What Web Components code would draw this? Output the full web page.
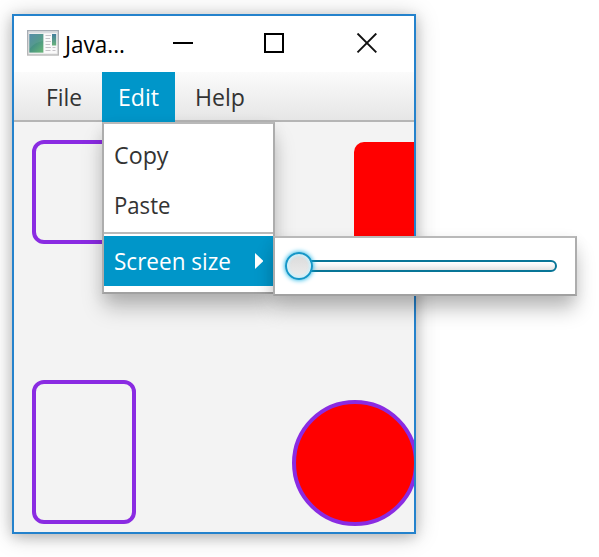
<!DOCTYPE html>
<html lang="en">
<head>
<meta charset="utf-8">
<title>Java menu</title>
<style>
html,body{margin:0;height:100%;overflow:hidden;background:#fff}
body{font:23px/34px "Open Sans","Noto Sans",sans-serif;color:#333}
</style>
</head>
<body>
<fx-desktop></fx-desktop>
<script>
const define = (name, html, init) => customElements.define(name, class extends HTMLElement {
  connectedCallback() {
    if (this.shadowRoot) return;
    this.attachShadow({mode: 'open'}).innerHTML = html;
    if (init) init(this);
  }
});

/* Text condensed to the advance width given in the "width" attribute. */
define('fx-label', `<style>
  :host{display:block;white-space:nowrap;flex:none;height:34px}
  span{display:inline-block;transform-origin:0 0}
</style><span><slot></slot></span>`, el => {
  const w = Number(el.getAttribute('width'));
  const s = el.shadowRoot.querySelector('span');
  el.style.width = w + 'px';
  s.style.transform = `scaleX(${w / s.getBoundingClientRect().width})`;
});

define('fx-titlebar', `<style>
  :host{display:grid;grid-template-columns:51px 65px 88px 96px 1fr;height:56px;background:#fff;color:#000}
  .icon{margin:14px 0 0 13px} svg{display:block}
  fx-label{margin-top:11px}
  .min{margin:18px 0 0 42px}.max{margin:17px 0 0 45px}.close{margin:17px 0 0 42px}
</style>
<svg class="icon" width="32" height="26" viewBox="0 0 32 26">
  <defs>
    <linearGradient id="frame" x2="0" y2="1"><stop stop-color="#a5abb3"/><stop offset="1" stop-color="#b9b9b9"/></linearGradient>
    <linearGradient id="pane" x1="0" y1="0" x2=".8" y2="1"><stop stop-color="#4883a3"/><stop offset=".55" stop-color="#489384"/><stop offset="1" stop-color="#62b177"/></linearGradient>
    <linearGradient id="side" x2="0" y2="1"><stop stop-color="#427e9d"/><stop offset="1" stop-color="#69b27b"/></linearGradient>
  </defs>
  <rect x=".7" y=".7" width="30.6" height="24.3" fill="#ededed" stroke="url(#frame)" stroke-width="1.4"/>
  <path d="M1.5 2.2H30.5" stroke="#d8dce0" stroke-width="1.4"/>
  <rect x="2.3" y="4" width="14" height="18.6" fill="url(#pane)"/>
  <path d="M2.3 4H16.3V11Q8 12 2.3 19Z" fill="#fff" opacity=".08"/>
  <rect x="17" y="3.6" width="12.7" height="19.4" fill="#fafafa"/>
  <path d="M18.5 5.5H24M18.5 8.5H23M18.5 11.5H24M18.5 14.5H23M18.5 17.5H24M18.5 20.5H23.5M25.5 17.5H28.5M25.5 20.5H28.5" stroke="#c6c3c8" stroke-width="1"/>
  <rect x="25" y="4" width="4.2" height="11.5" fill="url(#side)"/>
</svg>
<fx-label width="60">Java...</fx-label>
<svg class="min" width="22" height="20"><path d="M1 9H21" stroke="#000" stroke-width="2"/></svg>
<svg class="max" width="22" height="22"><rect x="2" y="1" width="18" height="18" fill="none" stroke="#000" stroke-width="2"/></svg>
<svg class="close" width="22" height="22"><path d="M1.5 .5L20.3 19.3M20.3 .5L1.5 19.3" stroke="#111" stroke-width="1.9"/></svg>`);

define('fx-menubar', `<style>
  :host{display:flex;box-sizing:border-box;height:50px;padding-left:16px;background:linear-gradient(#fbfbfb,#e6e6e6 48px,#b5b5b5 48px)}
</style><slot></slot>`);

define('fx-menu-button', `<style>
  :host{display:block;box-sizing:border-box;height:50px;padding:8px 16px 0}
  :host([selected]){background:#0096c9;color:#fff}
</style><slot></slot>`);

define('fx-canvas', `<style>
  :host{display:block;height:410px;overflow:hidden} svg{display:block}
</style>
<svg width="400" height="410">
  <g fill="none" stroke="#8a2be2" stroke-width="4">
    <rect x="20" y="20" width="100" height="100" rx="10"/>
    <rect x="20" y="260" width="100" height="140" rx="10"/>
    <circle cx="341" cy="341" r="61" fill="#f00"/>
  </g>
  <rect x="340" y="20" width="100" height="140" rx="10" fill="#f00"/>
</svg>`);

define('fx-window', `<style>
  :host{display:block;box-sizing:border-box;width:404px;height:520px;border:2px solid #2482cc;background:#f3f3f3;
    box-shadow:0 2px 22px rgba(0,0,0,.22),0 3px 11px rgba(0,0,0,.16)}
</style><slot></slot>`);

define('fx-popup', `<style>
  :host{display:block;box-sizing:border-box;background:#fff;border:2px solid;border-color:#b9b9b9 #adadad #a1a1a1;
    box-shadow:0 15px 20px -2px rgba(0,0,0,.25),0 4px 14px rgba(0,0,0,.07)}
</style><slot></slot>`);

define('fx-menu-item', `<style>
  :host{display:flex;align-items:flex-start;box-sizing:border-box;height:50px;padding:8px 10px 0}
  :host([selected]){background:#0096c9;color:#fff}
</style><slot></slot>`);

define('fx-separator', `<style>
  :host{display:block;box-sizing:border-box;height:4px;margin-top:2px;border-top:2px solid #bababa}
</style>`);

define('fx-slider', `<style>
  :host{display:flex;align-items:center;height:56px;padding-left:10px}
  .thumb{box-sizing:border-box;flex:none;width:28px;height:28px;border:2px solid #1497c8;border-radius:50%;
    background:linear-gradient(#dadada,#ededed);background-clip:padding-box;
    box-shadow:0 0 5px #04aee4,inset 0 0 2px 2px rgba(205,240,250,.9);z-index:1}
  .track{box-sizing:border-box;width:258px;height:12px;margin-left:-14px;border:2px solid #087597;border-radius:6px;
    background:linear-gradient(#fff,#f6f6f6 40%,#e2e2e2);box-shadow:inset 0 1px #fff}
</style><div class="thumb"></div><div class="track"></div>`);

define('fx-desktop', `<style>
  :host{display:block;position:relative;width:599px;height:557px;overflow:hidden}
  fx-window{margin:14px 0 0 12px;position:absolute;left:0;top:0}
  .menu{position:absolute;left:102px;top:122px;width:173px;height:172px;padding-top:6px}
  .sub{position:absolute;left:273px;top:236px;width:304px;height:60px}
  .arrow{display:block;margin:9px 0 0 23px}
</style>
<fx-window>
  <fx-titlebar></fx-titlebar>
  <fx-menubar>
    <fx-menu-button><fx-label width="36">File</fx-label></fx-menu-button>
    <fx-menu-button selected style="margin-left:4px"><fx-label width="41">Edit</fx-label></fx-menu-button>
    <fx-menu-button style="margin-left:4px"><fx-label width="50">Help</fx-label></fx-menu-button>
  </fx-menubar>
  <fx-canvas></fx-canvas>
</fx-window>
<fx-popup class="menu">
  <fx-menu-item><fx-label width="54.5">Copy</fx-label></fx-menu-item>
  <fx-menu-item><fx-label width="56.5">Paste</fx-label></fx-menu-item>
  <fx-separator></fx-separator>
  <fx-menu-item selected><fx-label width="117">Screen size</fx-label>
    <svg class="arrow" style="margin-left:24px" width="9" height="17"><path d="M0 0L8.5 8L0 16Z" fill="#fff"/></svg>
  </fx-menu-item>
</fx-popup>
<fx-popup class="sub"><fx-slider></fx-slider></fx-popup>`);
</script>
</body>
</html>
